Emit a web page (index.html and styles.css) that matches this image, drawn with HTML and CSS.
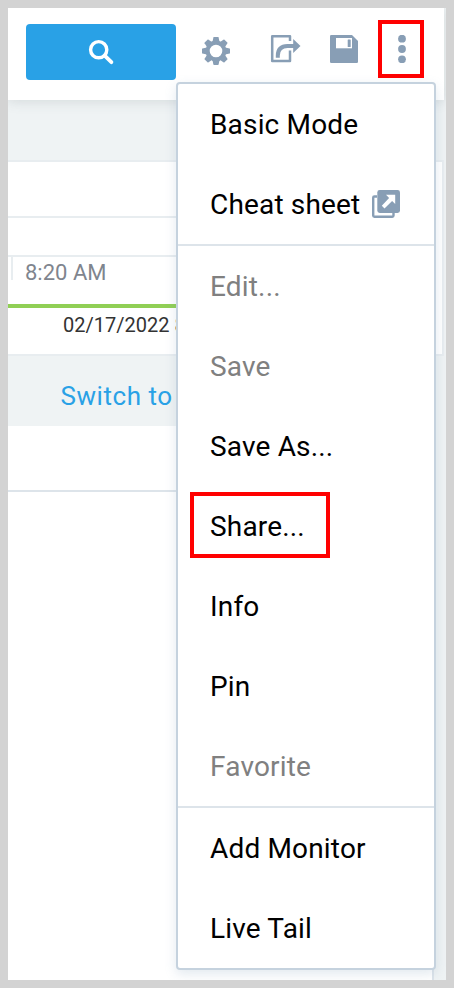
FILE: index.html
```html
<!DOCTYPE html>
<html lang="en">
<head>
<meta charset="utf-8">
<title>Log Search</title>
<link rel="stylesheet" href="styles.css">
</head>
<body>
<div class="app">
  <header class="toolbar">
    <button class="search-button" aria-label="Search">
      <svg width="28" height="28" viewBox="0 0 28 28"><circle cx="11.7" cy="11.7" r="8.1" fill="none" stroke="#fff" stroke-width="3.4"/><path d="M17.7 17.7 L24.4 24.2" stroke="#fff" stroke-width="3.8" stroke-linecap="round"/></svg>
    </button>
    <div class="tools">
      <svg class="gear" width="28" height="28" viewBox="0 0 28 28"><g fill="#889eb5"><path fill-rule="evenodd" d="M14 3.6a10.4 10.4 0 1 0 0 20.8a10.4 10.4 0 1 0 0-20.8zM14 7.7a6.3 6.3 0 1 1 0 12.6a6.3 6.3 0 1 1 0-12.6z"/><path id="tooth" d="M10.2 6 L11.4 .4 Q11.5 0 12 0 H16 Q16.5 0 16.6 .4 L17.8 6z"/><use href="#tooth" transform="rotate(45 14 14)"/><use href="#tooth" transform="rotate(90 14 14)"/><use href="#tooth" transform="rotate(135 14 14)"/><use href="#tooth" transform="rotate(180 14 14)"/><use href="#tooth" transform="rotate(225 14 14)"/><use href="#tooth" transform="rotate(270 14 14)"/><use href="#tooth" transform="rotate(315 14 14)"/></g></svg>
      <svg class="export" width="31" height="30" viewBox="0 0 31 30"><path d="M20 7 V2.2 H2.2 V27 H20 V16.5" fill="none" stroke="#889eb5" stroke-width="2.5" stroke-linejoin="round"/><path d="M7.8 23.7 V21.5 Q8 12.3 17.5 12.1 H24" fill="none" stroke="#889eb5" stroke-width="4"/><path d="M23.2 5 L30.5 12.1 L23.2 19z" fill="#889eb5"/></svg>
      <svg class="disk" width="28" height="28" viewBox="0 0 28 28"><path d="M1.3 0H22L28 6V26.7Q28 28 26.7 28H1.3Q0 28 0 26.7V1.3Q0 0 1.3 0z" fill="#889eb5"/><path d="M6 3H22V13.3H6z" fill="#fff"/><rect x="17.7" y="4.5" width="3" height="7.5" rx=".5" fill="#889eb5"/></svg>
      <div class="more"><svg width="8" height="28" viewBox="0 0 8 28"><g fill="#889eb5"><circle cx="4" cy="3.7" r="3.9"/><circle cx="4" cy="14" r="3.9"/><circle cx="4" cy="24.3" r="3.9"/></g></svg></div>
    </div>
  </header>
  <main>
    <div class="strip"></div>
    <section class="timeline">
      <div class="row-a"></div>
      <div class="row-b"></div>
      <div class="axis"><span class="tick">8:20 AM</span></div>
      <div class="range">02/17/2022 8:20</div>
    </section>
    <div class="switch-bar"><a>Switch to</a></div>
    <section class="results"><div class="results-head"></div></section>
  </main>
  <nav class="menu">
    <div class="group">
      <div class="item">Basic Mode</div>
      <div class="item">Cheat sheet
        <svg class="external" width="28" height="28" viewBox="0 0 28 28"><path d="M5 6.5 H2.4 Q1.2 6.5 1.2 7.7 V25.6 Q1.2 26.8 2.4 26.8 H20.3 Q21.5 26.8 21.5 25.6 V23" fill="none" stroke="#889eb5" stroke-width="2.4"/><rect x="5.3" y="0" width="22.7" height="23" rx="2.4" fill="#889eb5"/><path d="M14 4.7H23.2V14L20.1 10.9L12.5 18.4L9.8 15.7L17.1 8z" fill="#fff"/></svg>
      </div>
    </div>
    <div class="group">
      <div class="item disabled">Edit...</div>
      <div class="item disabled">Save</div>
      <div class="item">Save As...</div>
      <div class="item marked">Share...</div>
      <div class="item">Info</div>
      <div class="item">Pin</div>
      <div class="item disabled">Favorite</div>
    </div>
    <div class="group">
      <div class="item">Add Monitor</div>
      <div class="item">Live Tail</div>
    </div>
  </nav>
</div>
</body>
</html>
```
FILE: styles.css
```css
*, *::after { box-sizing: border-box; }
body { margin: 0; background: #d3d3d3; font-family: Roboto, sans-serif; }
.app {
  position: relative;
  width: 454px;
  height: 988px;
  border: 8px solid #d3d3d3;
  background: #eff3f4;
  overflow: hidden;
}
.toolbar {
  position: relative;
  display: flex;
  align-items: flex-start;
  width: 436px;
  height: 92px;
  padding: 16px 0 0 18px;
  background: #fff;
  box-shadow: 0 1px 12px rgba(80, 95, 100, .18);
}
.search-button {
  display: flex;
  align-items: center;
  justify-content: center;
  width: 150px;
  height: 56px;
  padding: 0;
  border: 0;
  border-radius: 4px;
  background: #29a1e6;
}
.tools { display: flex; align-items: flex-start; }
.tools svg { display: block; }
.gear { margin: 13px 0 0 26px; }
.export { margin: 10px 0 0 40px; }
.disk { margin: 11px 0 0 29px; }
.more { position: relative; margin: 11px 0 0 40px; }
.more::after {
  content: "";
  position: absolute;
  inset: -15px -18px -15px -20px;
  border: 4px solid #f00;
}
.strip { height: 60px; }
.timeline {
  width: 436px;
  height: 196px;
  border: solid #e8edf0;
  border-width: 2px 2px 2px 0;
  background: #fff;
}
.row-a { height: 56px; border-bottom: 2px solid #e8edf0; }
.row-b { height: 39px; border-bottom: 2px solid #e8edf0; }
.row-a, .row-b, .axis { width: 420px; }
.axis { height: 51px; padding-left: 3px; border-bottom: 4px solid #90cf55; }
.tick {
  display: block;
  height: 23px;
  padding: 3px 0 0 12px;
  border-left: 2px solid #e8edf0;
  color: #7f858e;
  font-size: 22px;
  line-height: 26px;
}
.range {
  padding: 4px 0 0 55px;
  color: #333;
  font-size: 20px;
  line-height: 26px;
  white-space: nowrap;
}
.switch-bar {
  height: 70px;
  padding: 22px 0 0 52.5px;
  color: #29a1e6;
  font-size: 26px;
  line-height: 36px;
  letter-spacing: .55px;
}
.results {
  width: 426px;
  height: 560px;
  border-right: 2px solid #dde4ea;
  background: #fff;
}
.results-head { height: 66px; border-bottom: 2px solid #dde4ea; }
.menu {
  position: absolute;
  top: 74px;
  left: 168px;
  width: 260px;
  border: 2px solid #c5d2de;
  border-radius: 4px;
  background: #fff;
  box-shadow: 0 4px 12px rgba(110, 145, 175, .2);
}
.group + .group { border-top: 2px solid #dde4ea; }
.item {
  position: relative;
  display: flex;
  align-items: center;
  height: 80px;
  padding-left: 32px;
  color: #000;
  font-size: 28px;
  letter-spacing: .17px;
}
.disabled { color: #808080; }
.external { margin-left: 11.5px; }
.marked::after {
  content: "";
  position: absolute;
  left: 12px;
  top: 6px;
  width: 140px;
  height: 66px;
  border: 4px solid #f00;
}
```
